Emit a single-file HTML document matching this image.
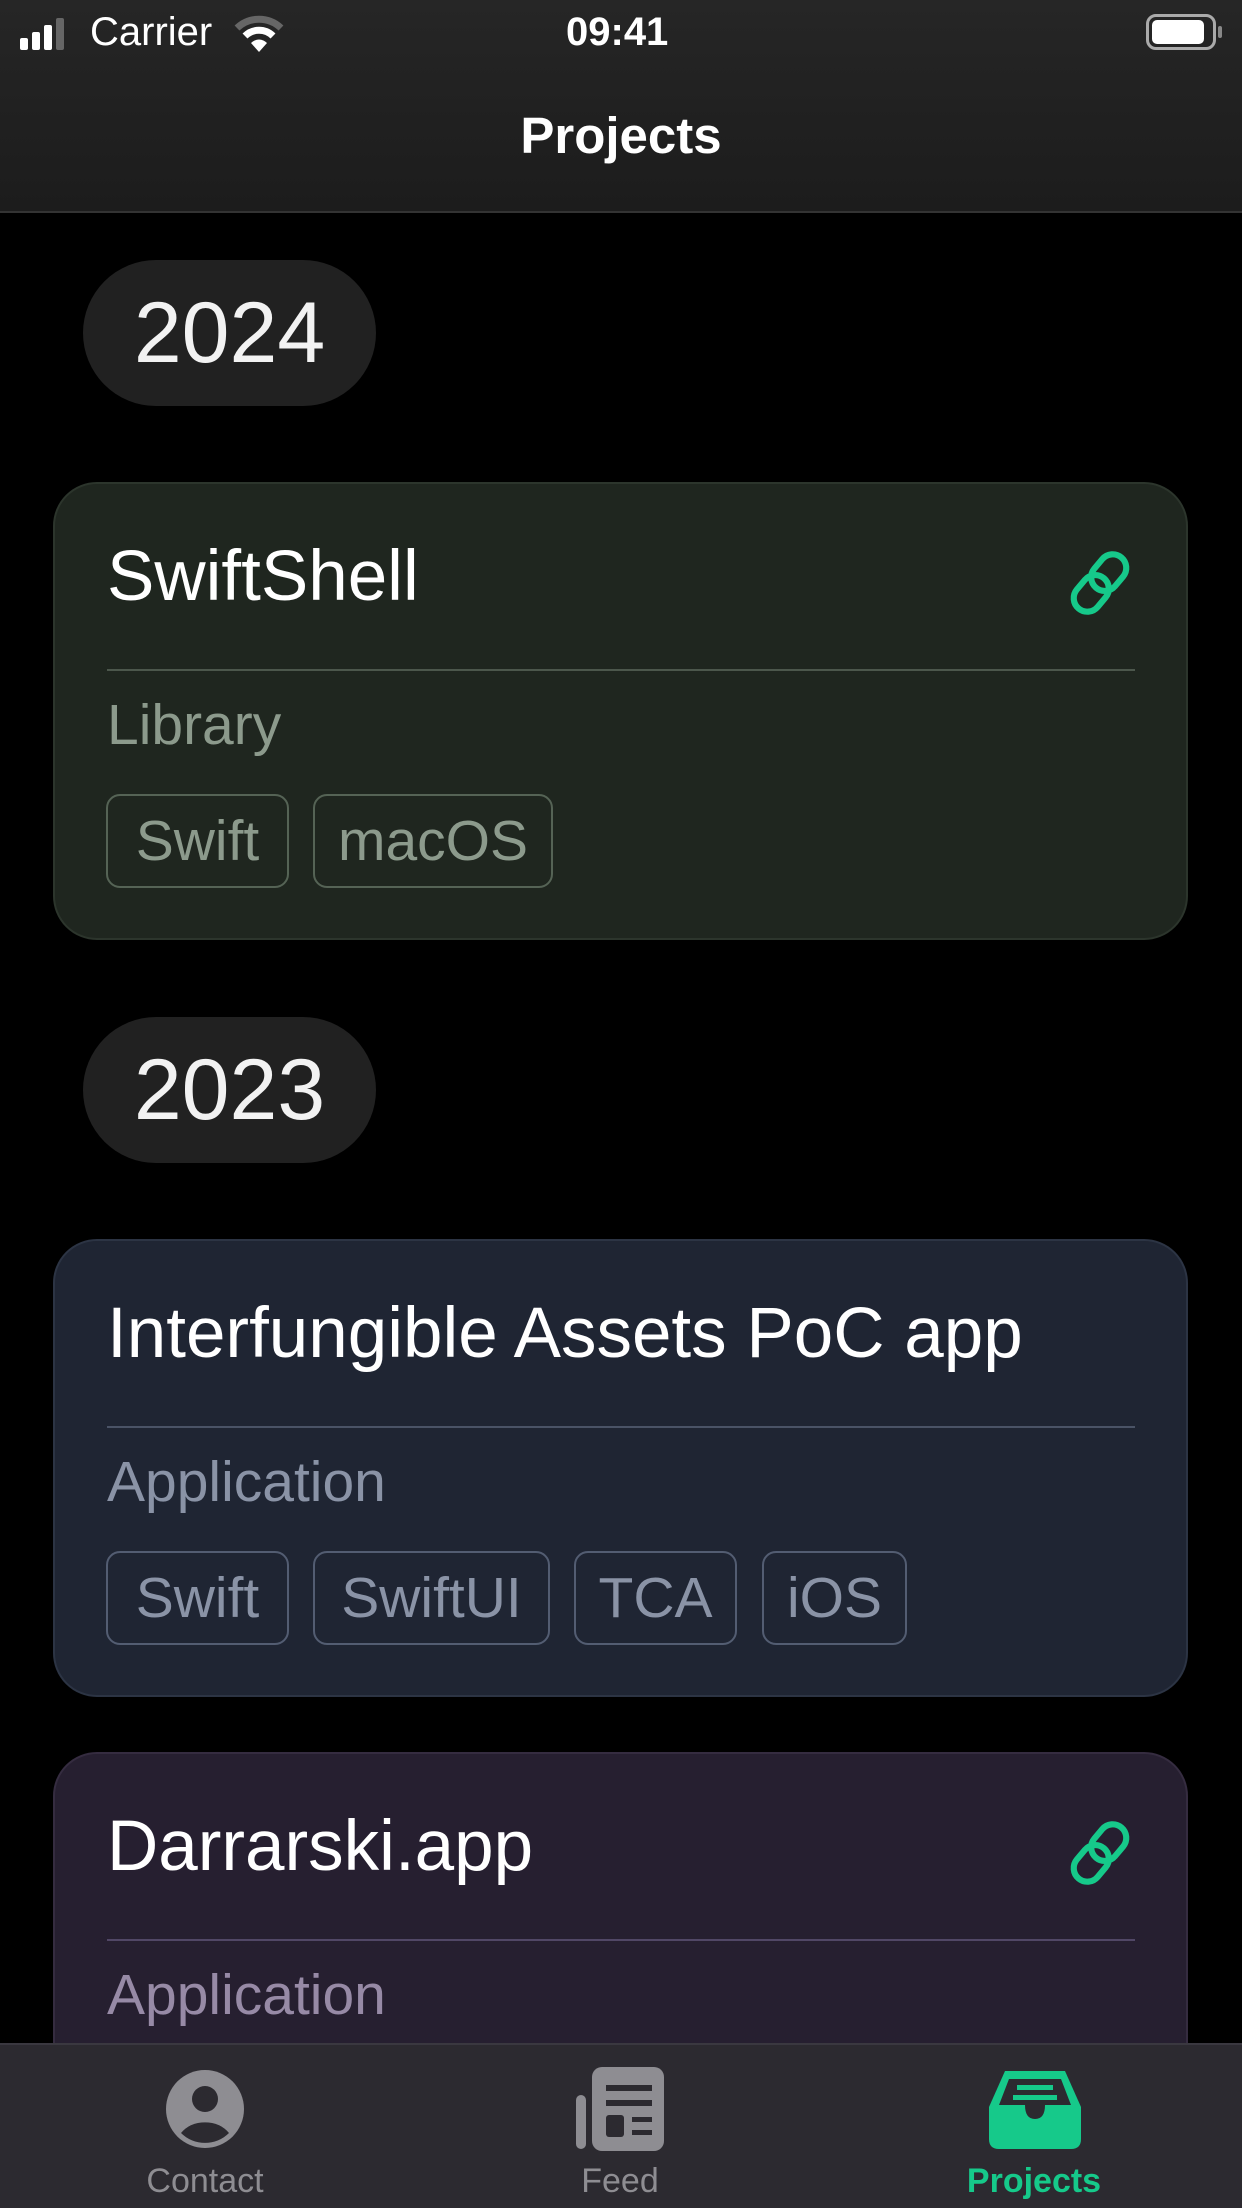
<!DOCTYPE html>
<html><head><meta charset="utf-8">
<style>
*{margin:0;padding:0;box-sizing:border-box}
html{width:1242px;height:2208px;overflow:hidden;background:#000}
body{width:1242px;height:2208px;background:#000;font-family:"Liberation Sans",sans-serif;position:relative;overflow:hidden;color:#fff}
.abs{position:absolute}
.nav{left:0;top:0;width:1242px;height:213px;background:linear-gradient(#262626,#1c1c1c);border-bottom:2px solid #333}
.pill{background:#212121;border-radius:73px;height:146px;font-size:86px;line-height:146px;text-align:center;color:#f2f2f2}
.card{left:53px;width:1135px;border-radius:44px;border:2px solid}
.title{position:absolute;left:52px;font-size:71px;color:#fff}
.div{position:absolute;left:52px;width:1028px;height:2px}
.sub{position:absolute;left:52px;font-size:57px}
.tag{position:absolute;height:94px;border:2px solid;border-radius:14px;font-size:57px;line-height:90px;text-align:center}
.tab{position:absolute;top:2043px;left:0;width:1242px;height:165px;background:#2c2a30;border-top:2px solid #3a3840}
.tl{position:absolute;top:2162px;font-size:34px;text-align:center;width:240px;color:#8e8d92}
</style></head><body>
<div class="abs nav">
  <svg class="abs" style="left:20px;top:16px" width="60" height="36"><rect x="0" y="22" width="8" height="12" rx="2" fill="#fff"/><rect x="12" y="16" width="8" height="18" rx="2" fill="#fff"/><rect x="24" y="9" width="8" height="25" rx="2" fill="#fff"/><rect x="36" y="2" width="8" height="32" rx="2" fill="#666"/></svg>
  <div class="abs" style="left:90px;top:10px;font-size:40px">Carrier</div>
  <svg class="abs" style="left:234px;top:14px" width="50" height="40" viewBox="0 0 50 40"><path d="M3 14 A32 32 0 0 1 47 14" stroke="#666" stroke-width="7" fill="none"/><path d="M11 22 A20 20 0 0 1 39 22" stroke="#fff" stroke-width="7" fill="none"/><path d="M25 38 L17 29 A11 11 0 0 1 33 29 Z" fill="#fff"/></svg>
  <div class="abs" style="left:566px;top:10px;font-size:40px;font-weight:bold">09:41</div>
  <div class="abs" style="left:1146px;top:14px;width:70px;height:36px;border:3px solid #aaa;border-radius:10px"><div style="margin:3px;width:52px;height:24px;background:#fff;border-radius:5px"></div></div>
  <div class="abs" style="left:1218px;top:26px;width:4px;height:12px;background:#888;border-radius:2px"></div>
  <div class="abs" style="left:0;width:1242px;top:106px;text-align:center;font-size:51px;font-weight:bold">Projects</div>
</div>

<div class="abs pill" style="left:83px;top:260px;width:293px">2024</div>
<div class="abs card" style="top:482px;height:458px;background:#1f261f;border-color:#2c352c">
  <div class="title" style="top:52px">SwiftShell</div>
  <svg class="abs" style="left:1008px;top:62px" width="74" height="74" viewBox="0 0 60 60"><g transform="rotate(40 30 30)" fill="none" stroke="#16c98a" stroke-width="5"><rect x="19" y="3" width="22" height="32" rx="11"/><rect x="19" y="25" width="22" height="32" rx="11"/></g></svg>
  <div class="div" style="top:185px;background:#4c574c"></div>
  <div class="sub" style="top:208px;color:#8c9a8c">Library</div>
  <div class="tag" style="left:51px;top:310px;width:183px;border-color:#556355;color:#8c9a8c">Swift</div>
  <div class="tag" style="left:258px;top:310px;width:240px;border-color:#556355;color:#8c9a8c">macOS</div>
</div>

<div class="abs pill" style="left:83px;top:1017px;width:293px">2023</div>
<div class="abs card" style="top:1239px;height:458px;background:#1f2533;border-color:#2c3444">
  <div class="title" style="top:52px">Interfungible Assets PoC app</div>
  <div class="div" style="top:185px;background:#4a5366"></div>
  <div class="sub" style="top:208px;color:#8a93a6">Application</div>
  <div class="tag" style="left:51px;top:310px;width:183px;border-color:#535d72;color:#8a93a6">Swift</div>
  <div class="tag" style="left:258px;top:310px;width:237px;border-color:#535d72;color:#8a93a6">SwiftUI</div>
  <div class="tag" style="left:519px;top:310px;width:163px;border-color:#535d72;color:#8a93a6">TCA</div>
  <div class="tag" style="left:707px;top:310px;width:145px;border-color:#535d72;color:#8a93a6">iOS</div>
</div>

<div class="abs card" style="top:1752px;height:440px;background:#261f30;border-color:#352c40">
  <div class="title" style="top:52px">Darrarski.app</div>
  <svg class="abs" style="left:1008px;top:62px" width="74" height="74" viewBox="0 0 60 60"><g transform="rotate(40 30 30)" fill="none" stroke="#16c98a" stroke-width="5"><rect x="19" y="3" width="22" height="32" rx="11"/><rect x="19" y="25" width="22" height="32" rx="11"/></g></svg>
  <div class="div" style="top:185px;background:#514766"></div>
  <div class="sub" style="top:208px;color:#978aa6">Application</div>
</div>

<div class="tab">
  <svg class="abs" style="left:165px;top:24px" width="80" height="80" viewBox="0 0 80 80"><circle cx="40" cy="40" r="39" fill="#8e8d92"/><circle cx="40" cy="30" r="13" fill="#2c2a30"/><path d="M16 64 A28 22 0 0 1 64 64 A34 34 0 0 1 16 64Z" fill="#2c2a30"/></svg>
  <svg class="abs" style="left:576px;top:22px" width="90" height="84" viewBox="0 0 90 84"><rect x="0" y="28" width="10" height="54" rx="5" fill="#8e8d92"/><rect x="16" y="0" width="72" height="84" rx="10" fill="#8e8d92"/><rect x="30" y="18" width="46" height="6" fill="#2c2a30"/><rect x="30" y="33" width="46" height="6" fill="#2c2a30"/><rect x="30" y="48" width="18" height="22" rx="3" fill="#2c2a30"/><rect x="56" y="50" width="20" height="5" fill="#2c2a30"/><rect x="56" y="63" width="20" height="5" fill="#2c2a30"/></svg>
  <svg class="abs" style="left:989px;top:26px" width="92" height="78" viewBox="0 0 92 78"><path d="M16 0 H76 L92 36 V68 Q92 78 82 78 H10 Q0 78 0 68 V36 Z" fill="#16c98a"/><path d="M20 8 H72 L82 34 H56 Q56 48 46 48 Q36 48 36 34 H10 Z" fill="#2c2a30"/><rect x="28" y="14" width="36" height="5" fill="#16c98a"/><rect x="24" y="24" width="44" height="5" fill="#16c98a"/></svg>
  <div class="tl" style="left:85px;top:117px">Contact</div>
  <div class="tl" style="left:500px;top:117px">Feed</div>
  <div class="tl" style="left:914px;top:117px;color:#16c98a;font-weight:bold">Projects</div>
</div>
</body></html>
